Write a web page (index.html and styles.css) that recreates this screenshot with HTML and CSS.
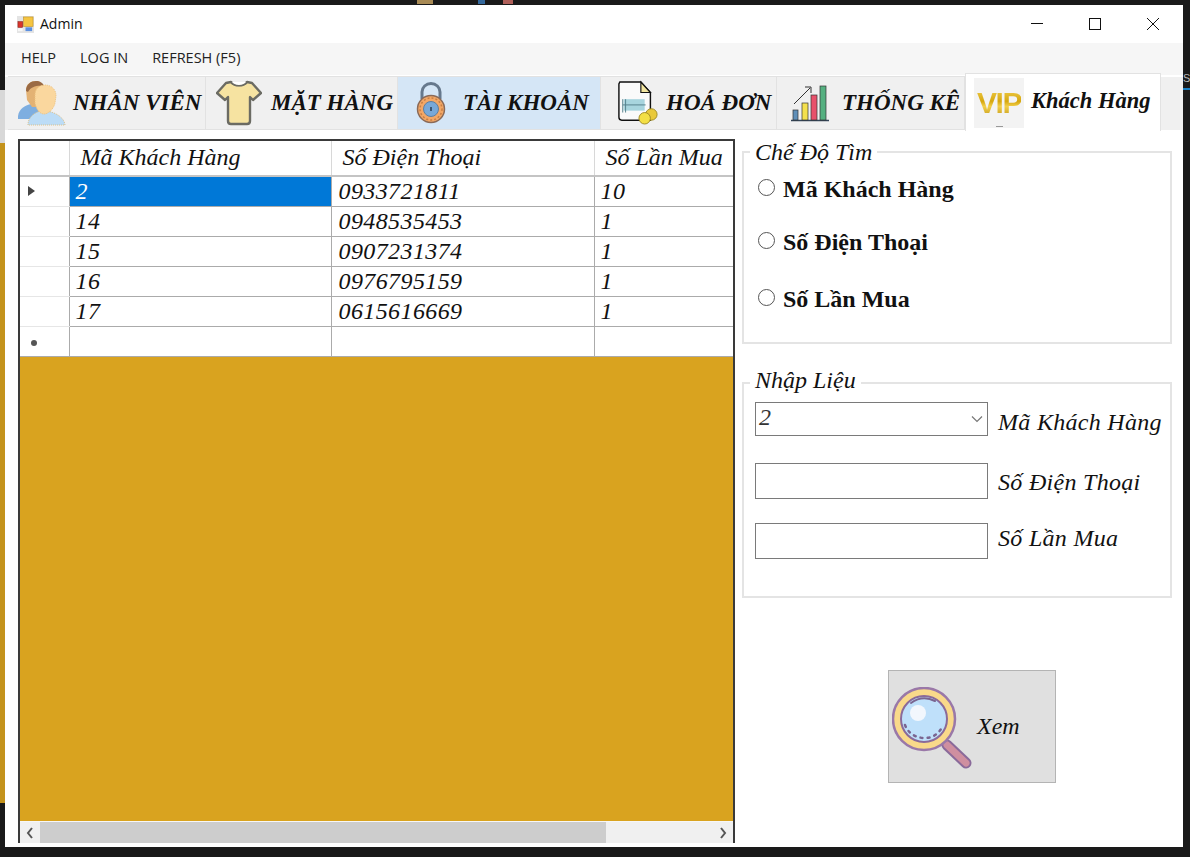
FILE: index.html
```html
<!DOCTYPE html>
<html lang="vi">
<head>
    <meta charset="UTF-8">
    <meta name="viewport" content="width=device-width, initial-scale=1.0">
    <title>Admin</title>
    <link rel="stylesheet" href="styles.css">
</head>
<body>
    <!-- bits of the desktop showing round the window -->
    <span class="desk desk-light"></span>
    <span class="desk desk-gold"></span>
    <span class="desk desk-line"></span>
    <span class="desk desk-letter">S</span>
    <span class="desk desk-bit1"></span>
    <span class="desk desk-bit2"></span>
    <span class="desk desk-bit3"></span>

    <div class="window">
        <div class="titlebar">
            <svg class="app-icon" viewBox="0 0 18 18">
                <rect x="0" y="0" width="18" height="18" fill="#e4e4e4"/>
                <rect x="7" y="1" width="10" height="10" fill="#f5c542" stroke="#b98a1c" stroke-width="0.6"/>
                <rect x="1" y="6" width="5" height="6" fill="#d9342b" stroke="#8a1f1a" stroke-width="0.6"/>
                <rect x="9" y="12" width="7" height="4" fill="#5b8fe0"/>
                <rect x="1" y="13" width="5" height="3" fill="#f7f7f7"/>
            </svg>
            <span class="app-title">Admin</span>
            <div class="winbtns">
                <button class="winbtn"><svg viewBox="0 0 12 12"><path d="M0 5.500h12" stroke="#111" fill="none"/></svg></button>
                <button class="winbtn"><svg viewBox="0 0 12 12"><rect x="0.5" y="0.5" width="11" height="11" stroke="#111" fill="none"/></svg></button>
                <button class="winbtn"><svg viewBox="0 0 12 12"><path d="M0 0l12 12M12 0L0 12" stroke="#111" fill="none"/></svg></button>
            </div>
        </div>

        <div class="menubar">
            <span class="menu-item">HELP</span>
            <span class="menu-item">LOG IN</span>
            <span class="menu-item">REFRESH (F5)</span>
        </div>

        <div class="tabs">
            <div class="tab">
                <div class="tab-icon">
                    <svg width="50" height="50" viewBox="0 0 50 50">
                        <path d="M2 38c1-8 8-11 13-12h8l5 6-4 9H2z" fill="#7eaee0"/>
                        <path d="M10 12c0-6 5-9 10-9 4 0 8 3 8 8l-1 13-5 5h-6l-5-7z" fill="#e3b274"/>
                        <path d="M10 13c0-7 5-10 10-10 4 0 7 2 8 5-6-1-13 0-16 6z" fill="#9a6a44"/>
                        <path d="M12 47c0-9 8-13 13-14h6c6 1 17 5 18 14z" fill="#bcdcf6" stroke="#d9c08c" stroke-dasharray="1 1"/>
                        <path d="M19 17c0-7 5-10 10-10 6 0 11 4 11 11l-1 7c-1 5-6 11-11 11-5 0-8-6-9-11z" fill="#fad79e" stroke="#edc27f" stroke-dasharray="1 1"/>
                    </svg>
                </div>
                <span class="tab-label">NHÂN VIÊN</span>
            </div>
            <div class="tab">
                <div class="tab-icon">
                    <svg width="46" height="46" viewBox="0 0 46 46">
                        <path d="M15 2c3 4 13 4 16 0l5 1 9 10-8 7-3-3v24c0 2-1 3-3 3H15c-2 0-3-1-3-3V17l-3 3-8-7 9-10z" fill="#f6e3a1" stroke="#6b6b63" stroke-width="2.4" stroke-linejoin="round"/>
                        <path d="M15 2c3 5 13 5 16 0" fill="#fff" stroke="#6b6b63" stroke-width="1.6"/>
                    </svg>
                </div>
                <span class="tab-label">MẶT HÀNG</span>
            </div>
            <div class="tab tab-hover">
                <div class="tab-icon">
                    <svg width="32" height="42" viewBox="0 0 32 42">
                        <path d="M7 17V10a9 8.500 0 0 1 18 0v7" fill="none" stroke="#66788c" stroke-width="3"/>
                        <circle cx="16" cy="27" r="13.500" fill="#f2a766" stroke="#8a6a58" stroke-width="1.500"/>
                        <circle cx="16" cy="27" r="11" fill="none" stroke="#c77f45" stroke-width="1.500" stroke-dasharray="2 2"/>
                        <circle cx="16" cy="27" r="7.500" fill="#77a8d8" stroke="#5f7f9f"/>
                        <rect x="15" y="25" width="2" height="4" fill="#3b5877"/>
                    </svg>
                </div>
                <span class="tab-label">TÀI KHOẢN</span>
            </div>
            <div class="tab">
                <div class="tab-icon">
                    <svg class="icon-doc" width="44" height="46" viewBox="0 0 44 46">
                        <path d="M3 1h22l10 11v29H5c-2 0-3-1-3-3V3z" fill="#fafafa" stroke="#111" stroke-width="1.500"/>
                        <path d="M25 1v11h10z" fill="#f3e6a0" stroke="#111" stroke-width="1.200"/>
                        <rect x="7" y="19" width="22" height="12" fill="#a8d5de"/>
                        <path d="M6 19v14M9 19v14M6 25h24" stroke="#55808c" fill="none"/>
                        <circle cx="36" cy="35" r="6" fill="#e9c93a" stroke="#a08c24"/>
                        <circle cx="29" cy="39" r="6" fill="#f3df45" stroke="#a08c24"/>
                    </svg>
                </div>
                <span class="tab-label">HOÁ ĐƠN</span>
            </div>
            <div class="tab">
                <div class="tab-icon">
                    <svg width="40" height="38" viewBox="0 0 40 38">
                        <path d="M4 20L20 4M15 3h6v6" fill="none" stroke="#333" stroke-width="1"/>
                        <path d="M1 36.500h38" stroke="#34465a" stroke-width="1.600"/>
                        <rect x="3" y="26" width="5" height="10" fill="#5f8fb8" stroke="#333" stroke-width="0.700"/>
                        <rect x="12" y="19" width="6" height="17" fill="#f4e04d" stroke="#333" stroke-width="0.700"/>
                        <rect x="21" y="11" width="6" height="25" fill="#e8506a" stroke="#333" stroke-width="0.700"/>
                        <rect x="30" y="2" width="6" height="34" fill="#55b080" stroke="#333" stroke-width="0.700"/>
                    </svg>
                </div>
                <span class="tab-label">THỐNG KÊ</span>
            </div>
            <div class="tab tab-active">
                <div class="tab-icon vip-box"><span class="vip-text">VIP</span></div>
                <span class="tab-label tab-label-small">Khách Hàng</span>
            </div>
        </div>

        <div class="main">
            <div class="grid-frame">
                <table class="grid">
                    <thead>
                        <tr>
                            <th class="row-head"></th>
                            <th>Mã Khách Hàng</th>
                            <th>Số Điện Thoại</th>
                            <th>Số Lần Mua</th>
                        </tr>
                    </thead>
                    <tbody>
                        <tr class="selected">
                            <td class="row-head"><span class="row-arrow"></span></td>
                            <td class="cell-selected">2</td>
                            <td>0933721811</td>
                            <td>10</td>
                        </tr>
                        <tr>
                            <td class="row-head"></td>
                            <td>14</td>
                            <td>0948535453</td>
                            <td>1</td>
                        </tr>
                        <tr>
                            <td class="row-head"></td>
                            <td>15</td>
                            <td>0907231374</td>
                            <td>1</td>
                        </tr>
                        <tr>
                            <td class="row-head"></td>
                            <td>16</td>
                            <td>0976795159</td>
                            <td>1</td>
                        </tr>
                        <tr>
                            <td class="row-head"></td>
                            <td>17</td>
                            <td>0615616669</td>
                            <td>1</td>
                        </tr>
                        <tr>
                            <td class="row-head"><span class="row-star"></span></td>
                            <td></td>
                            <td></td>
                            <td></td>
                        </tr>
                    </tbody>
                </table>
                <div class="grid-empty"></div>
                <div class="scrollbar">
                    <svg class="scroll-arrow" viewBox="0 0 8 12"><path d="M6 1L2 6l4 5" fill="none" stroke="#555" stroke-width="2"/></svg>
                    <div class="scroll-track"><div class="scroll-thumb"></div></div>
                    <svg class="scroll-arrow" viewBox="0 0 8 12"><path d="M2 1l4 5-4 5" fill="none" stroke="#555" stroke-width="2"/></svg>
                </div>
            </div>

            <div class="side">
                <fieldset class="group group-mode">
                    <legend>Chế Độ Tìm</legend>
                    <label class="radio-row"><input class="radio" type="radio" name="mode"> Mã Khách Hàng</label>
                    <label class="radio-row"><input class="radio" type="radio" name="mode"> Số Điện Thoại</label>
                    <label class="radio-row"><input class="radio" type="radio" name="mode"> Số Lần Mua</label>
                </fieldset>

                <fieldset class="group group-input">
                    <legend>Nhập Liệu</legend>
                    <div class="form-row form-row-combo">
                        <div class="combo">
                            <span>2</span>
                            <svg width="12" height="8" viewBox="0 0 12 8"><path d="M1 1.500l5 5 5-5" fill="none" stroke="#777" stroke-width="1.200"/></svg>
                        </div>
                        <span class="form-label">Mã Khách Hàng</span>
                    </div>
                    <div class="form-row form-row-phone">
                        <input class="text-input" type="text">
                        <span class="form-label">Số Điện Thoại</span>
                    </div>
                    <div class="form-row form-row-count">
                        <input class="text-input" type="text">
                        <span class="form-label">Số Lần Mua</span>
                    </div>
                </fieldset>

                <button class="search-btn">
                    <svg class="search-icon" width="82" height="84" viewBox="0 0 82 84">
                        <path d="M55 58l19 18" stroke="#8a6a9a" stroke-width="11" stroke-linecap="round"/>
                        <path d="M55 58l19 18" stroke="#cf8fa0" stroke-width="7" stroke-linecap="round"/>
                        <circle cx="32" cy="32" r="31" fill="#f9d98a" stroke="#9a78a8" stroke-width="2.500"/>
                        <circle cx="32" cy="32" r="23" fill="#bfe0fa" stroke="#8a6a9a" stroke-width="2"/>
                        <circle cx="26" cy="26" r="8" fill="#f2f7fd"/>
                        <path d="M19 16c7-5 16-6 24-2" fill="none" stroke="#7a6590" stroke-width="2" stroke-linecap="round"/>
                        <path d="M13 38c3 8 10 13 20 13 8 0 15-5 18-13" fill="none" stroke="#7a6590" stroke-width="2.500" stroke-dasharray="2 5" stroke-linecap="round"/>
                    </svg>
                    <span class="search-label">Xem</span>
                </button>
            </div>
        </div>
    </div>
</body>
</html>
```

FILE: styles.css
```css
html, body {
    margin: 0;
    height: 100%;
}
body {
    position: relative;
    box-sizing: border-box;
    height: 857px;
    padding: 5px 7px 10px 5px;
    background-color: #1a1a1a;
    overflow: hidden;
    font-family: "Liberation Serif", serif;
    color: #111;
}

/* desktop behind the window */
.desk {
    position: absolute;
    display: block;
}
.desk-light {
    left: 0;
    top: 90px;
    width: 5px;
    height: 53px;
    background-color: #d8d8d8;
}
.desk-gold {
    left: 0;
    top: 143px;
    width: 5px;
    height: 660px;
    background-color: #c4931c;
}
.desk-line {
    left: 1183px;
    top: 88px;
    width: 7px;
    height: 2px;
    background-color: #1a7fc4;
}
.desk-letter {
    left: 1183px;
    top: 72px;
    font-family: "Liberation Sans", sans-serif;
    font-size: 11px;
    color: #bbb;
}
.desk-bit1 {
    left: 417px;
    top: 0;
    width: 16px;
    height: 4px;
    background-color: #a88a55;
}
.desk-bit2 {
    left: 478px;
    top: 0;
    width: 7px;
    height: 4px;
    background-color: #34689c;
}
.desk-bit3 {
    left: 503px;
    top: 0;
    width: 10px;
    height: 4px;
    background-color: #b0605a;
}

.window {
    position: relative;
    width: 1178px;
    height: 842px;
    display: flex;
    flex-direction: column;
    background-color: #fff;
}

.titlebar {
    height: 38px;
    display: flex;
    align-items: center;
    padding-left: 12px;
    flex-shrink: 0;
}
.app-icon {
    width: 17px;
    height: 17px;
    margin-right: 6px;
}
.app-title {
    font-family: "Open Sans", sans-serif;
    font-size: 14px;
    margin-bottom: 2px;
    color: #111;
}
.winbtns {
    margin-left: auto;
    display: flex;
    margin-right: 1px;
}
.winbtn {
    width: 58px;
    height: 38px;
    padding: 0;
    border: 0;
    background: none;
    display: flex;
    align-items: center;
    justify-content: center;
}
.winbtn svg {
    width: 12px;
    height: 12px;
}

.menubar {
    height: 32px;
    box-sizing: border-box;
    padding: 0 0 4px 16px;
    display: flex;
    align-items: center;
    gap: 24px;
    background-color: #f6f6f6;
    flex-shrink: 0;
}
.menu-item {
    font-family: "Open Sans", sans-serif;
    font-size: 14.500px;
    color: #222;
}

.tabs {
    height: 55px;
    display: grid;
    grid-template-columns: 198px 192px 203px 176px 188px 196px 1fr;
    padding-left: 3px;
    background: linear-gradient(#fff 0, #fff 2px, #f0f0f0 2px);
    flex-shrink: 0;
}
.tab {
    display: flex;
    align-items: center;
    gap: 7px;
    box-sizing: border-box;
    padding-left: 8px;
    margin-top: 1px;
    background-color: #f0f0f0;
    border: 1px solid #e2e2e2;
    border-left: 0;
    white-space: nowrap;
}
.tab-hover {
    background-color: #d5e6f6;
}
.tab-active {
    margin-top: -2px;
    margin-bottom: -1px;
    background-color: #fff;
    border-bottom: 0;
    border-left: 1px solid #e2e2e2;
    position: relative;
}
.tab-icon {
    width: 50px;
    height: 50px;
    display: flex;
    align-items: center;
    justify-content: center;
    flex-shrink: 0;
}
.icon-doc {
    margin-left: 8px;
}
.tab-label {
    font-size: 23px;
    font-weight: bold;
    font-style: italic;
    color: #111;
}
.tab-label-small {
    font-size: 22.500px;
    margin-top: -3px;
}
.vip-box {
    position: relative;
    background-color: #f3f3f3;
}
.vip-box::after {
    content: "";
    position: absolute;
    left: 22px;
    bottom: 1px;
    width: 7px;
    height: 1px;
    background-color: #999;
}
.vip-text {
    font-family: "Liberation Sans", sans-serif;
    font-size: 30px;
    font-weight: bold;
    letter-spacing: -1.500px;
    background: linear-gradient(#f6d65a, #d6a70f 45%, #f2cf4a 60%, #b98d0c);
    -webkit-background-clip: text;
    background-clip: text;
    color: transparent;
}

.main {
    flex: 1;
    display: flex;
    gap: 7px;
    padding: 9px 0 4px 13px;
    min-height: 0;
}

.grid-frame {
    width: 717px;
    box-sizing: border-box;
    display: flex;
    flex-direction: column;
    border: 2px solid #3a3a3a;
    border-bottom: 0;
    overflow: hidden;
    flex-shrink: 0;
}
.grid {
    table-layout: fixed;
    border-collapse: collapse;
    width: 715px;
    background-color: #fff;
    font-size: 24px;
    font-style: italic;
    flex-shrink: 0;
}
.grid th {
    box-sizing: border-box;
    height: 35px;
    padding: 0 0 2px 11px;
    font-weight: normal;
    text-align: left;
    border-right: 1px solid #d8d8d8;
    border-bottom: 2px solid #c4c4c4;
    white-space: nowrap;
    overflow: hidden;
}
.grid td {
    box-sizing: border-box;
    height: 30px;
    padding: 0 0 0 6px;
    border-right: 1px solid #ababab;
    border-bottom: 1px solid #ababab;
    letter-spacing: 0.4px;
}
.grid th:nth-child(1), .grid td:nth-child(1) {
    width: 49px;
}
.grid th:nth-child(2), .grid td:nth-child(2) {
    width: 262px;
}
.grid th:nth-child(3), .grid td:nth-child(3) {
    width: 263px;
}
.grid td:nth-child(3) {
    padding-left: 7px;
}
.grid td.row-head {
    padding: 0 0 0 8px;
    border-bottom: 1px solid #e6e6e6;
    vertical-align: middle;
}
.grid tr:last-child td {
    border-bottom-color: #ababab;
}
.cell-selected {
    background-color: #0078d7;
    color: #fff;
}
.row-arrow {
    display: block;
    width: 0;
    height: 0;
    border-left: 7px solid #444;
    border-top: 5px solid transparent;
    border-bottom: 5px solid transparent;
}
.row-star {
    display: block;
    width: 6px;
    height: 6px;
    margin: 3px 0 0 3px;
    border-radius: 50%;
    background-color: #555;
}
.grid-empty {
    flex: 1;
    background-color: #d9a31f;
}
.scrollbar {
    height: 21px;
    display: flex;
    align-items: center;
    background-color: #f0f0f0;
    border-top: 1px solid #f7f7f7;
    flex-shrink: 0;
}
.scroll-arrow {
    width: 8px;
    height: 12px;
    padding: 0 6px;
    flex-shrink: 0;
}
.scroll-track {
    flex: 1;
    height: 100%;
    padding-left: 0;
}
.scroll-thumb {
    width: 566px;
    margin-left: 0;
    height: 100%;
    background-color: #cdcdcd;
}

.side {
    width: 431px;
    display: flex;
    flex-direction: column;
    align-items: flex-start;
}
.group {
    box-sizing: border-box;
    width: 430px;
    margin: 0;
    padding: 0 0 0 11px;
    border: 2px solid #e4e4e4;
}
.group legend {
    margin-left: -5px;
    padding: 0 5px;
    font-size: 24px;
    font-style: italic;
    line-height: 26px;
}
.group-mode {
    height: 205px;
}
.group-input {
    height: 231px;
    margin-top: 23px;
}
.group-input legend {
    padding-bottom: 6px;
}

.radio-row {
    display: flex;
    align-items: center;
    height: 30px;
    gap: 8px;
    font-size: 24px;
    font-weight: bold;
}
.radio-row:nth-of-type(1) {
    margin-top: 9px;
}
.radio-row:nth-of-type(2) {
    margin-top: 23px;
}
.radio-row:nth-of-type(3) {
    margin-top: 27px;
}
.radio {
    appearance: none;
    box-sizing: border-box;
    width: 17px;
    height: 17px;
    margin: 0 0 3px 3px;
    border: 1.500px solid #555;
    border-radius: 50%;
    background-color: #fff;
}

.form-row {
    display: flex;
    align-items: center;
    gap: 10px;
    font-size: 24px;
    font-style: italic;
    letter-spacing: 0.3px;
}
.form-row-combo {
    margin-top: 3px;
}
.form-row-combo .form-label {
    padding-top: 6px;
}
.form-row-phone {
    margin-top: 27px;
}
.form-row-phone .form-label {
    padding-top: 2px;
}
.form-row-count {
    margin-top: 24px;
}
.form-row-count .form-label {
    padding-bottom: 6px;
}
.combo {
    box-sizing: border-box;
    width: 233px;
    height: 34px;
    display: flex;
    align-items: center;
    justify-content: space-between;
    padding: 0 4px 4px 3px;
    border: 1px solid #7a7a7a;
    background-color: #fff;
    color: #333;
}
.combo svg {
    margin-top: 4px;
}
.text-input {
    box-sizing: border-box;
    width: 233px;
    height: 36px;
    margin: 0;
    padding: 0;
    border: 1px solid #7a7a7a;
    background-color: #fff;
}

.search-btn {
    width: 168px;
    height: 113px;
    margin: 72px 0 0 146px;
    padding: 0 0 0 3px;
    display: flex;
    align-items: center;
    gap: 3px;
    box-sizing: border-box;
    border: 1px solid #b4b4b4;
    background-color: #e0e0e0;
    font-family: "Liberation Serif", serif;
    font-size: 24px;
    font-style: italic;
    color: #111;
}
.search-icon {
    margin-top: 4px;
}
```
